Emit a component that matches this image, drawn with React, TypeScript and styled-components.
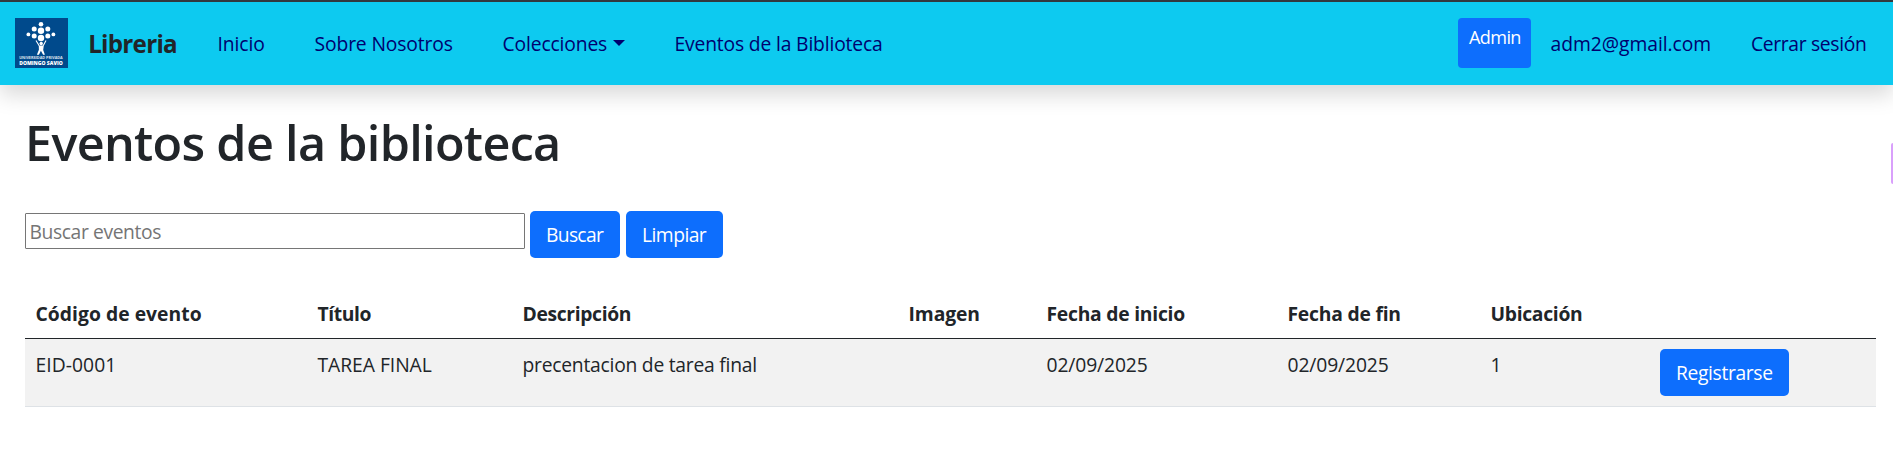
import React from 'react';
import styled, { createGlobalStyle } from 'styled-components';

const GlobalStyle = createGlobalStyle`
  * { box-sizing: border-box; }
  body {
    margin: 0;
    background: #fff;
    color: #212529;
    font: 400 19.3px/30px "Open Sans", "Noto Sans", sans-serif;
    overflow: hidden;
  }
`;

const Page = styled.div`
  position: relative;
  height: 460px;
  overflow: hidden;
`;

const TopEdge = styled.div`
  height: 2px;
  background: #343a40;
`;

const Navbar = styled.nav`
  display: flex;
  align-items: center;
  height: 83px;
  padding-left: 15px;
  background: #0dcaf0;
  box-shadow: 0 10px 20px rgba(0, 0, 0, 0.15);
`;

const Logo = styled.svg`
  display: block;
  width: 53px;
  height: 50px;
  margin: 0 20.2px 1px 0;
`;

const Brand = styled.a`
  width: 129.3px;
  font-size: 24.2px;
  font-weight: 700;
  letter-spacing: -0.73px;
`;

const NavLink = styled.a<{ $width?: number; $spacing: number }>`
  display: flex;
  align-items: center;
  width: ${(p) => (p.$width ? `${p.$width}px` : 'auto')};
  color: #00006e;
  letter-spacing: ${(p) => p.$spacing}px;
  white-space: nowrap;
`;

const Caret = styled.span`
  margin: -1px 0 0 5.5px;
  border-top: 6px solid;
  border-left: 6px solid transparent;
  border-right: 6px solid transparent;
`;

const UserArea = styled.div`
  display: flex;
  align-items: center;
  width: 435px;
  margin-left: auto;
`;

const RoleBadge = styled.span`
  width: 73px;
  height: 50px;
  margin: 0 19.5px 1px 0;
  padding: 5px 0 0 11px;
  border-radius: 4px;
  background: #0d6efd;
  color: #fff;
  font-size: 18.1px;
  line-height: 28px;
  letter-spacing: -0.62px;
`;

const Main = styled.main`
  padding: 27px 17px 0 25px;
`;

const Title = styled.h1`
  margin: 0 0 39px;
  font-size: 48.5px;
  font-weight: 600;
  line-height: 60px;
  letter-spacing: -0.67px;
`;

const SearchBar = styled.form`
  display: flex;
  align-items: flex-start;
  height: 77px;
`;

const SearchInput = styled.input`
  width: 500px;
  height: 36px;
  margin: 2px 5px 0 0;
  padding: 0 3.5px;
  border: 1px solid #767676;
  border-radius: 1px;
  background: #fff;
  font: inherit;
  letter-spacing: -0.4px;
  &::placeholder { color: #757575; opacity: 1; }
`;

const Button = styled.button<{ $width: number; $spacing: number }>`
  display: block;
  width: ${(p) => p.$width}px;
  height: 47px;
  margin: 0 6px 0 0;
  padding: 0 0 0 16px;
  border: 0;
  border-radius: 5px;
  background: #0d6efd;
  color: #fff;
  font: inherit;
  text-align: left;
  letter-spacing: ${(p) => p.$spacing}px;
`;

const Table = styled.table`
  width: 1851px;
  table-layout: fixed;
  border-collapse: separate;
  border-spacing: 0;
`;

const HeadCell = styled.th<{ $spacing: number }>`
  height: 51px;
  padding: 11px 9.5px 9px 10.5px;
  border-bottom: 1px solid #212529;
  font-weight: 700;
  text-align: left;
  vertical-align: top;
  white-space: nowrap;
  letter-spacing: ${(p) => p.$spacing}px;
`;

const Cell = styled.td<{ $spacing?: number }>`
  height: 68px;
  padding: 11px 9.5px 9px 10.5px;
  border-bottom: 1px solid #dee2e6;
  background: #f2f2f2;
  vertical-align: top;
  white-space: nowrap;
  letter-spacing: ${(p) => p.$spacing ?? 0}px;
`;

const ActionCell = styled(Cell)`
  padding: 10px;
`;

const SideTab = styled.div`
  position: absolute;
  right: 0;
  top: 143px;
  width: 2px;
  height: 41px;
  border-radius: 2px 0 0 2px;
  background: #d9a0fb;
`;

const columns = [
  { label: 'Código de evento', width: 282, spacing: 0.04 },
  { label: 'Título', width: 205, spacing: -0.42 },
  { label: 'Descripción', width: 386, spacing: -0.345 },
  { label: 'Imagen', width: 138, spacing: -0.084 },
  { label: 'Fecha de inicio', width: 241, spacing: -0.235 },
  { label: 'Fecha de fin', width: 203, spacing: -0.215 },
  { label: 'Ubicación', width: 170, spacing: -0.3 },
  { label: '', width: 226, spacing: 0 },
];

const dots = [
  [26, 6.2, 2.3], [19.2, 11, 2.5], [32.8, 11, 2.5], [26, 12.8, 3.2],
  [13.4, 16.4, 1.9], [38.4, 16.4, 1.9], [19.2, 18, 2.5], [32.8, 18, 2.5], [26, 20, 3.2],
];

function UniversityLogo() {
  return (
    <Logo viewBox="0 0 53 50">
      <rect width="53" height="50" fill="#004a8c" />
      <g fill="#fff">
        {dots.map(([x, y, r]) => <circle key={`${x}-${y}`} cx={x} cy={y} r={r} />)}
        <circle cx="26.2" cy="25.5" r="1.7" />
        <path d="M23.8 27.5h5l-.6 4.5 1.7 4.7h-1.8l-2.2-4-2 4h-2l2-5z" />
      </g>
      <path d="M21 22.5l3.2 5.3M31 22.5l-2.8 5.3" fill="none" stroke="#fff" strokeWidth="1.1" />
      <g fill="#fff" fontFamily="Open Sans, sans-serif" fontWeight="700">
        <text x="4.2" y="41.3" fontSize="3.5" textLength="43.5" lengthAdjust="spacingAndGlyphs" opacity=".85">UNIVERSIDAD PRIVADA</text>
        <text x="4.2" y="46.7" fontSize="5.2" fontWeight="800" textLength="43.5" lengthAdjust="spacingAndGlyphs">DOMINGO SAVIO</text>
      </g>
    </Logo>
  );
}

export default function App() {
  return (
    <Page>
      <GlobalStyle />
      <TopEdge />
      <Navbar>
        <UniversityLogo />
        <Brand>Libreria</Brand>
        <NavLink $width={97.1} $spacing={-0.07}>Inicio</NavLink>
        <NavLink $width={188} $spacing={-0.14}>Sobre Nosotros</NavLink>
        <NavLink $width={171.9} $spacing={-0.15}>Colecciones<Caret /></NavLink>
        <NavLink $spacing={-0.16}>Eventos de la Biblioteca</NavLink>
        <UserArea>
          <RoleBadge>Admin</RoleBadge>
          <NavLink $width={200.5} $spacing={-0.04}>adm2@gmail.com</NavLink>
          <NavLink $spacing={-0.34}>Cerrar sesión</NavLink>
        </UserArea>
      </Navbar>
      <Main>
        <Title>Eventos de la biblioteca</Title>
        <SearchBar>
          <SearchInput placeholder="Buscar eventos" />
          <Button type="button" $width={90} $spacing={-0.7}>Buscar</Button>
          <Button type="button" $width={97} $spacing={-0.55}>Limpiar</Button>
        </SearchBar>
        <Table>
          <colgroup>
            {columns.map((c) => <col key={c.width} style={{ width: c.width }} />)}
          </colgroup>
          <thead>
            <tr>
              {columns.map((c) => <HeadCell key={c.width} $spacing={c.spacing}>{c.label}</HeadCell>)}
            </tr>
          </thead>
          <tbody>
            <tr>
              <Cell $spacing={0.05}>EID-0001</Cell>
              <Cell $spacing={-0.04}>TAREA FINAL</Cell>
              <Cell $spacing={-0.245}>precentacion de tarea final</Cell>
              <Cell />
              <Cell $spacing={-0.117}>02/09/2025</Cell>
              <Cell $spacing={-0.117}>02/09/2025</Cell>
              <Cell>1</Cell>
              <ActionCell><Button type="button" $width={129} $spacing={-0.36}>Registrarse</Button></ActionCell>
            </tr>
          </tbody>
        </Table>
      </Main>
      <SideTab />
    </Page>
  );
}
